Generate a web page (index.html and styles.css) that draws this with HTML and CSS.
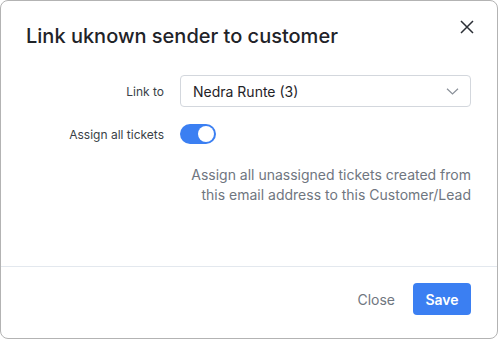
FILE: index.html
```html
<!DOCTYPE html>
<html>
<head>
<meta charset="utf-8">
<link rel="stylesheet" href="styles.css">
</head>
<body>
<div class="dialog">
  <div class="header">
    <h1 class="title">Link uknown sender to customer</h1>
    <button class="close-x" aria-label="Close">
      <svg width="14" height="14" viewBox="0 0 14 14"><path d="M1 1L13 13M13 1L1 13" stroke="#2b2f36" stroke-width="1.5" fill="none"/></svg>
    </button>
  </div>
  <div class="body">
    <div class="row">
      <label class="label">Link to</label>
      <div class="select">
        <span>Nedra Runte (3)</span>
        <svg width="13" height="7" viewBox="0 0 13 7"><path d="M1 0.8L6.5 6L12 0.8" stroke="#8a9099" stroke-width="1.2" fill="none"/></svg>
      </div>
    </div>
    <div class="row row-toggle">
      <label class="label">Assign all tickets</label>
      <div class="toggle"><span class="knob"></span></div>
    </div>
    <p class="help">Assign all unassigned tickets created from<br>this email address to this Customer/Lead</p>
  </div>
  <div class="footer">
    <button class="btn-close">Close</button>
    <button class="btn-save">Save</button>
  </div>
</div>
</body>
</html>
```
FILE: styles.css
```css
* { box-sizing: border-box; }
html, body { margin: 0; padding: 0; background: #fff; }
body { font-family: Inter, "Noto Sans", sans-serif; }
.dialog {
  width: 498px;
  height: 339px;
  border: 1px solid #b3b3b3;
  border-radius: 8px;
  display: flex;
  flex-direction: column;
  background: #fff;
}
.header {
  display: flex;
  justify-content: space-between;
  align-items: flex-start;
  padding: 21px 23px 0 25px;
}
.title {
  margin: 0;
  font-size: 20px;
  line-height: 28px;
  font-weight: 500;
  color: #1f2328;
}
.close-x {
  border: 0;
  background: none;
  padding: 0;
  margin-top: -2px;
  width: 14px;
  height: 14px;
  display: flex;
}
.body {
  padding: 25px 26px 0 25px;
  flex: 1;
}
.row {
  display: grid;
  grid-template-columns: 138px 1fr;
  column-gap: 16px;
  align-items: center;
}
.row-toggle { margin-top: 17px; }
.label {
  text-align: right;
  font-size: 12px;
  color: #3a3f47;
}
.select {
  height: 32px;
  border: 1px solid #d3d7dd;
  border-radius: 4px;
  display: flex;
  align-items: center;
  justify-content: space-between;
  padding: 0 11px 0 12px;
  font-size: 14px;
  color: #1f2328;
}
.toggle {
  width: 36px;
  height: 20px;
  border-radius: 10px;
  background: #3b7ff2;
  position: relative;
}
.knob {
  position: absolute;
  right: 2px;
  top: 2px;
  width: 16px;
  height: 16px;
  border-radius: 50%;
  background: #fff;
}
.help {
  margin: 21px 0 0 0;
  text-align: right;
  font-size: 14px;
  line-height: 20px;
  color: #6f7680;
}
.footer {
  border-top: 1px solid #e3e8ee;
  display: flex;
  justify-content: flex-end;
  align-items: center;
  gap: 18px;
  padding: 16px 26px 23px 0;
}
.btn-close {
  border: 0;
  background: none;
  font-family: inherit;
  font-size: 14px;
  color: #6f7680;
  padding: 0;
}
.btn-save {
  border: 0;
  background: #3b7ff2;
  color: #fff;
  font-family: inherit;
  font-size: 14px;
  font-weight: 600;
  width: 58px;
  height: 32px;
  border-radius: 4px;
}
```
